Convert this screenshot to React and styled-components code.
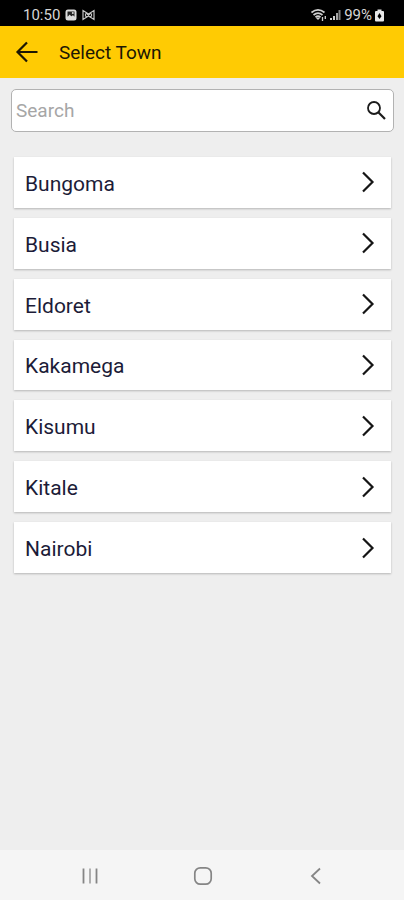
import React from "react";
import styled, { createGlobalStyle } from "styled-components";

const GlobalStyle = createGlobalStyle`
  *, *::before, *::after { box-sizing: border-box; }
  body {
    margin: 0;
    background: #eeeeee;
    font-family: Roboto, "Liberation Sans", sans-serif;
    font-weight: 400;
  }
  button, input { font: inherit; }
`;

const Screen = styled.div`
  display: flex;
  flex-direction: column;
  min-height: 100vh;
`;

const StatusBar = styled.div`
  display: flex;
  align-items: center;
  justify-content: space-between;
  height: 26px;
  padding: 4px 20px 0 23px;
  background: #000;
  color: #d6d6d6;
  font-size: 15px;
  line-height: 20px;
`;

const StatusGroup = styled.div`
  display: flex;
  align-items: center;
  gap: ${(p) => p.$gap}px;
  svg { display: block; }
`;

const Header = styled.header`
  display: flex;
  align-items: center;
  gap: 18px;
  height: 52px;
  padding: 2px 13px 0;
  background: #ffcb03;
  color: #1c1703;
`;

const IconButton = styled.button`
  display: flex;
  align-items: center;
  justify-content: center;
  flex: none;
  width: 28px;
  height: 28px;
  padding: 0;
  border: 0;
  background: none;
  color: inherit;
  cursor: pointer;
`;

const Title = styled.h1`
  margin: 0;
  font-size: 19px;
  line-height: 24px;
  font-weight: 400;
`;

const Main = styled.main`
  flex: 1;
  padding: 11px 10px 24px 11px;
`;

const SearchBox = styled.form`
  display: flex;
  align-items: center;
  height: 43px;
  padding: 0 3px 0 4px;
  border: 1px solid #b2b2b2;
  border-radius: 5px;
  background: #fff;
  color: #1b1b1b;
`;

const SearchInput = styled.input`
  flex: 1;
  min-width: 0;
  height: 100%;
  padding: 0;
  border: 0;
  outline: 0;
  background: none;
  color: #12122e;
  font-size: 19px;
  &::placeholder { color: #a6a6a6; opacity: 1; }
`;

const TownList = styled.ul`
  display: grid;
  grid-auto-rows: 1fr;
  gap: 10px;
  min-height: 416px;
  margin: 25px 3px 0;
  padding: 0;
  list-style: none;
`;

const TownButton = styled.button`
  display: flex;
  align-items: center;
  justify-content: space-between;
  width: 100%;
  height: 100%;
  padding: 3px 15px 0 11px;
  border: 0;
  background: #fff;
  box-shadow: 0 1px 2px rgba(0, 0, 0, 0.24);
  color: #1c1c38;
  font-size: 21px;
  line-height: 28px;
  text-align: left;
  cursor: pointer;
  svg { display: block; margin-bottom: 3px; }
`;

const NavBar = styled.nav`
  display: flex;
  align-items: center;
  justify-content: center;
  gap: 85px;
  height: 50px;
  padding: 2px 0 0 2px;
  background: #f5f5f5;
  color: #858585;
`;

const TOWNS = ["Bungoma", "Busia", "Eldoret", "Kakamega", "Kisumu", "Kitale", "Nairobi"];

const PictureIcon = () => (
  <svg width="12" height="12" viewBox="0 0 12 12" aria-hidden="true">
    <rect x="0.5" y="0.5" width="11" height="11" rx="2.5" fill="#dcdcdc" />
    <rect x="2.5" y="2.5" width="7" height="5" fill="#222" />
    <path d="M2 9 4.5 5.5 6.5 7.5 8 6 10 9Z" fill="#dcdcdc" />
    <circle cx="7.8" cy="4" r="1" fill="#dcdcdc" />
  </svg>
);

const BowIcon = () => (
  <svg width="13" height="12" viewBox="0 0 13 12" fill="none" stroke="#c4c4c4" strokeWidth="1.2" aria-hidden="true">
    <path d="M1 1.5 6.5 5 12 1.5V10.5L6.5 7 1 10.5Z" />
    <path d="M3.5 4.5v3M9.5 4.5v3M4 8 9 4M4 4l5 4" />
  </svg>
);

const WifiIcon = () => (
  <svg width="16" height="14" viewBox="0 0 16 14" fill="none" stroke="#cfcfcf" strokeWidth="1.7" aria-hidden="true">
    <path d="M.5 4.5Q7 -.8 13.5 4.5M2.5 7Q7 3.2 11.5 7M4.5 9.2Q7 7 9.5 9.2" />
    <path d="M4.5 9.5h5L7 12Z" fill="#cfcfcf" stroke="none" />
    <path d="M11.5 9v4M14.3 8v3" strokeWidth="1.3" />
  </svg>
);

const SignalIcon = () => (
  <svg width="11" height="12" viewBox="0 0 11 12" aria-hidden="true">
    <path d="M0 9h2v2H0ZM3 7h2v4H3Z" fill="#d0d0d0" />
    <path d="M6 4h2v7H6Z" fill="#a5a5a5" />
    <path d="M8.5 1h2v10h-2Z" fill="#858585" />
  </svg>
);

const BatteryIcon = () => (
  <svg width="9" height="13" viewBox="0 0 9 13" aria-hidden="true">
    <path d="M2.5 0.5h4V2H8q1 0 1 1v8.5q0 1-1 1H1q-1 0-1-1V3q0-1 1-1h1.5Z" fill="#e8e8e8" />
    <path d="M4.5 4 6.5 7.2 4.5 10 2.5 7.2Z" fill="#000" />
  </svg>
);

const BackArrow = () => (
  <svg width="24" height="24" viewBox="0 0 24 24" fill="none" stroke="currentColor" strokeWidth="2.2" aria-hidden="true">
    <path d="M22.5 11H2.5M12 1.5 2.5 11 12 20.5" />
  </svg>
);

const SearchIcon = () => (
  <svg width="22" height="22" viewBox="0 0 22 22" fill="none" stroke="currentColor" aria-hidden="true">
    <circle cx="9" cy="8" r="6" strokeWidth="1.8" />
    <path d="M13.3 12.3 20 19" strokeWidth="2.2" />
  </svg>
);

const Chevron = () => (
  <svg width="16" height="24" viewBox="0 0 16 24" fill="none" stroke="#151515" strokeWidth="2.2" aria-hidden="true">
    <path d="M3 2.5 12.5 12 3 21.5" />
  </svg>
);

const RecentsIcon = () => (
  <svg width="18" height="18" viewBox="0 0 18 18" fill="none" stroke="currentColor" strokeWidth="1.8" aria-hidden="true">
    <path d="M2.5 1.5v15M15.5 1.5v15" />
    <path d="M9 1.5v15" stroke="#a8a8a8" />
  </svg>
);

const HomeIcon = () => (
  <svg width="20" height="20" viewBox="0 0 20 20" fill="none" stroke="currentColor" strokeWidth="1.7" aria-hidden="true">
    <rect x="1.8" y="1.8" width="16.4" height="16.4" rx="5.5" />
  </svg>
);

const BackIcon = () => (
  <svg width="18" height="18" viewBox="0 0 18 18" fill="none" stroke="currentColor" strokeWidth="1.8" aria-hidden="true">
    <path d="M13 1.5 5 9l8 7.5" />
  </svg>
);

export default function App() {
  return (
    <Screen>
      <GlobalStyle />
      <StatusBar>
        <StatusGroup $gap={5}>
          <span>10:50</span>
          <PictureIcon />
          <BowIcon />
        </StatusGroup>
        <StatusGroup $gap={3}>
          <WifiIcon />
          <SignalIcon />
          <span>99%</span>
          <BatteryIcon />
        </StatusGroup>
      </StatusBar>
      <Header>
        <IconButton type="button" aria-label="Back">
          <BackArrow />
        </IconButton>
        <Title>Select Town</Title>
      </Header>
      <Main>
        <SearchBox role="search" onSubmit={(e) => e.preventDefault()}>
          <SearchInput type="text" placeholder="Search" aria-label="Search" />
          <IconButton type="submit" aria-label="Search towns">
            <SearchIcon />
          </IconButton>
        </SearchBox>
        <TownList>
          {TOWNS.map((town) => (
            <li key={town}>
              <TownButton type="button">
                <span>{town}</span>
                <Chevron />
              </TownButton>
            </li>
          ))}
        </TownList>
      </Main>
      <NavBar aria-label="System">
        <IconButton type="button" aria-label="Recent apps">
          <RecentsIcon />
        </IconButton>
        <IconButton type="button" aria-label="Home">
          <HomeIcon />
        </IconButton>
        <IconButton type="button" aria-label="Go back">
          <BackIcon />
        </IconButton>
      </NavBar>
    </Screen>
  );
}
